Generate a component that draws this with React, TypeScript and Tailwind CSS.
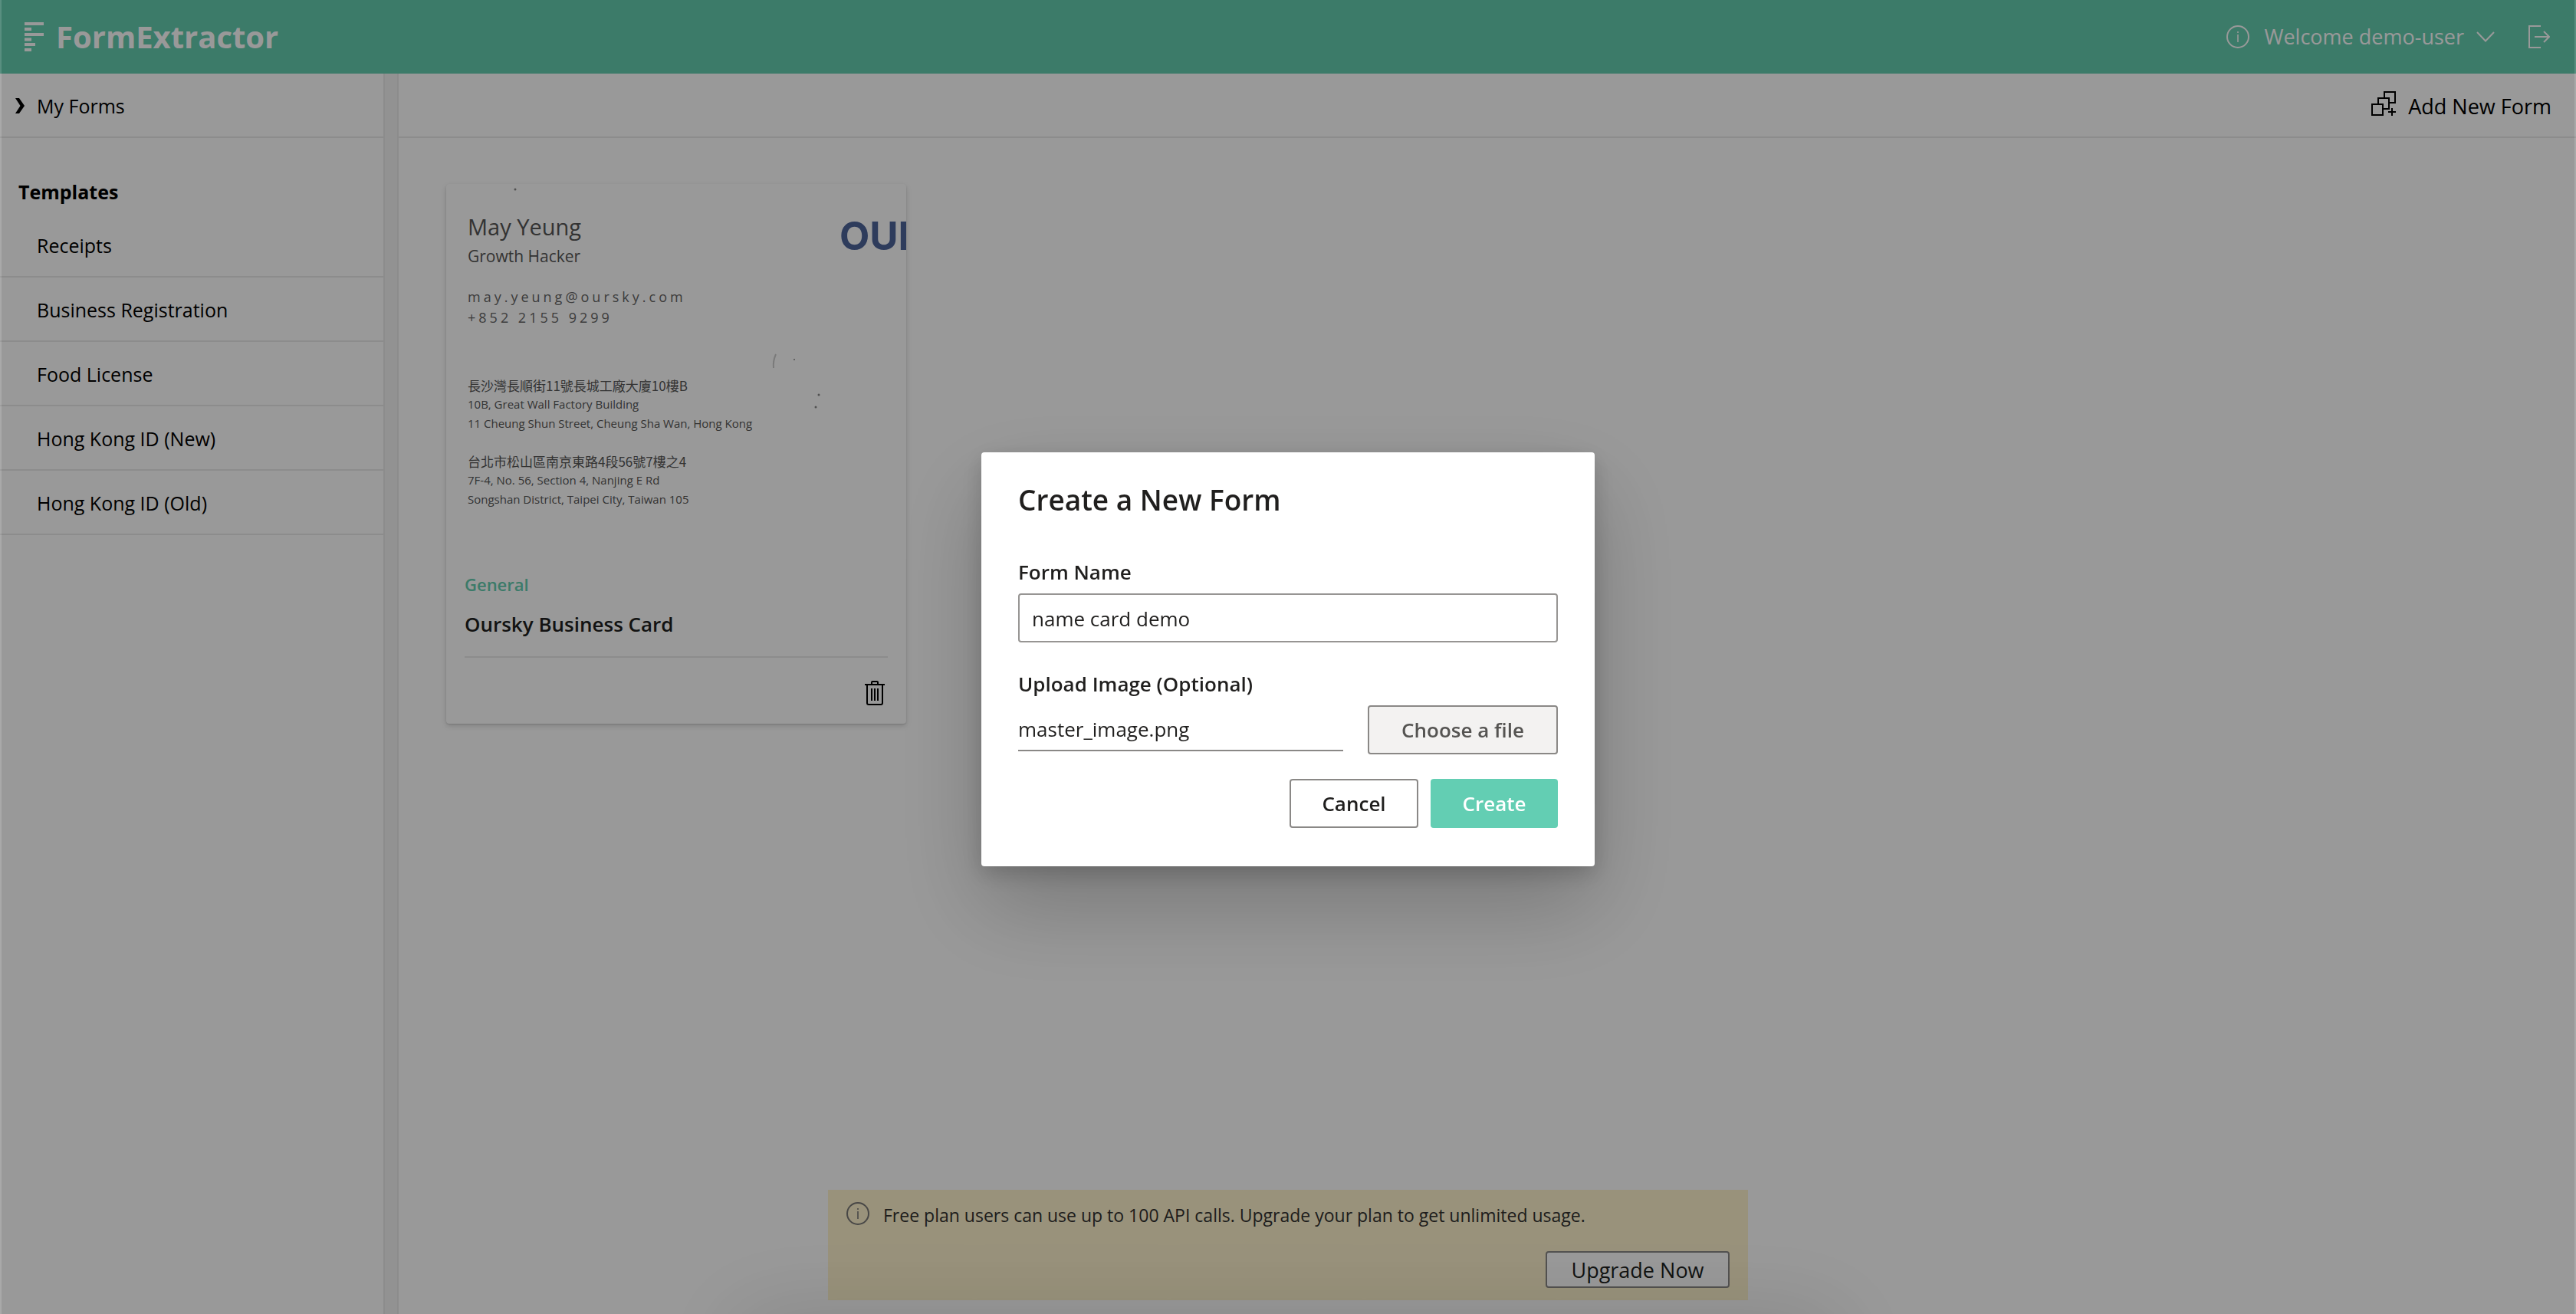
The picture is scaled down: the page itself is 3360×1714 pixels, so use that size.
import React, { useState } from "react";

const templates = [
  "Receipts",
  "Business Registration",
  "Food License",
  "Hong Kong ID (New)",
  "Hong Kong ID (Old)",
];

function InfoIcon() {
  return (
    <svg className="h-[30px] w-[30px] shrink-0" viewBox="0 0 30 30" fill="none" stroke="currentColor" strokeWidth="2" aria-hidden="true">
      <circle cx="15" cy="15" r="14" />
      <path d="M15 8v2M15 12v10" strokeWidth="1.6" />
    </svg>
  );
}

function LogoMark() {
  return (
    <svg className="h-[38px] w-[25px] shrink-0" viewBox="0 0 25 38" fill="currentColor" aria-hidden="true">
      <path d="M0 0h25v4H0zM0 7h9v4H0zM0 14h25v4H0zM0 20.5h9v4H0zM0 27h14v4H0zM0 34h9v4H0z" />
    </svg>
  );
}

function Header() {
  return (
    <header className="flex h-24 shrink-0 items-center justify-between bg-[#64cdb0] pr-[34px] pl-8 text-white">
      <a href="#home" className="flex items-center gap-4 text-[40px] leading-[52px] font-bold">
        <LogoMark />
        FormExtractor
      </a>
      <div className="flex items-center text-[27px] leading-10">
        <InfoIcon />
        <button type="button" className="ml-5 flex items-center gap-4">
          Welcome demo-user
          <svg className="h-3.5 w-6" viewBox="0 0 24 14" fill="none" stroke="currentColor" strokeWidth="2" aria-hidden="true">
            <path d="M1 1l11 11.5L23 1" />
          </svg>
        </button>
        <button type="button" aria-label="Sign out" className="ml-11">
          <svg className="h-[30px] w-7" viewBox="0 0 28 30" fill="none" stroke="currentColor" strokeWidth="2" aria-hidden="true">
            <path d="M16 1H1v28h15M8 15h19M20 8l7 7-7 7" />
          </svg>
        </button>
      </div>
    </header>
  );
}

function Sidebar() {
  return (
    <nav className="w-[502px] shrink-0 border-r-2 border-[#eaeaea] bg-white text-[25px] leading-10 text-black">
      <a href="#forms" className="flex h-[84px] items-center gap-4 border-b-2 border-[#eaeaea] pt-0.5 pl-5">
        <svg className="h-5 w-3" viewBox="0 0 12 20" fill="currentColor" aria-hidden="true">
          <path d="M0 0h5l7 10-7 10H0l6.5-10z" />
        </svg>
        My Forms
      </a>
      <h2 className="mt-[50px] mb-2 pl-6 font-bold">Templates</h2>
      <ul>
        {templates.map((name) => (
          <li key={name}>
            <a href="#template" className="flex h-[84px] items-center border-b-2 border-[#eaeaea] pt-0.5 pl-12">
              {name}
            </a>
          </li>
        ))}
      </ul>
    </nav>
  );
}

function CardPreview() {
  return (
    <div className="relative h-[482px] overflow-hidden pt-9 pl-7 text-[#555]">
      <div className="flex justify-between">
        <div>
          <p className="text-[29px] leading-10">May Yeung</p>
          <p className="mt-0.5 text-[21px] leading-8">Growth Hacker</p>
        </div>
        <p className="w-[87px] overflow-hidden font-[Inter] text-[51px] leading-[64px] font-bold text-[#4e6499]">OUR</p>
      </div>
      <p className="mt-6 text-[18px] leading-[27px] tracking-[4px] text-[#666]">
        may.yeung@oursky.com
        <br />
        +852 2155 9299
      </p>
      <div className="mt-[62px] text-[15px] leading-[25px]">
        <p className="font-['Noto_Sans_CJK_TC',sans-serif] text-[17px]">長沙灣長順街11號長城工廠大廈10樓B</p>
        <p>10B, Great Wall Factory Building</p>
        <p>11 Cheung Shun Street, Cheung Sha Wan, Hong Kong</p>
      </div>
      <div className="mt-6 text-[15px] leading-[25px]">
        <p className="font-['Noto_Sans_CJK_TC',sans-serif] text-[17px]">台北市松山區南京東路4段56號7樓之4</p>
        <p>7F-4, No. 56, Section 4, Nanjing E Rd</p>
        <p>Songshan District, Taipei City, Taiwan 105</p>
      </div>
      <svg className="absolute inset-0 h-full w-full" viewBox="0 0 600 482" fill="#888" aria-hidden="true">
        <circle cx="90" cy="7" r="1.5" />
        <path d="M430 222q-4 9-3 18" fill="none" stroke="#ccc" strokeWidth="2" />
        <circle cx="454" cy="229" r="1" />
        <circle cx="486" cy="275" r="1.5" />
        <circle cx="482" cy="291" r="1.5" />
      </svg>
    </div>
  );
}

function FormCard() {
  return (
    <article className="w-[600px] rounded-[4px] bg-white shadow-[0_3px_7px_rgba(0,0,0,0.15),0_1px_2px_rgba(0,0,0,0.12)]">
      <CardPreview />
      <div className="mx-6 border-b-2 border-[#eaeaea] pt-6 pb-[22px] font-semibold">
        <p className="text-[22px] leading-8 text-[#64cdb0]">General</p>
        <h3 className="mt-4 text-[26px] leading-10 text-[#201f1e]">Oursky Business Card</h3>
      </div>
      <div className="flex justify-end pt-[30px] pr-7 pb-6">
        <button type="button" aria-label="Delete form">
          <svg className="h-8 w-[26px] text-black" viewBox="0 0 26 32" fill="none" stroke="currentColor" strokeWidth="2" aria-hidden="true">
            <path d="M0 5h26M9 5V2q0-1 1-1h6q1 0 1 1v3M3 5v24q0 2 2 2h16q2 0 2-2V5M9 10v16M13 10v16M17 10v16" />
          </svg>
        </button>
      </div>
    </article>
  );
}

function Content() {
  return (
    <main className="min-w-0 flex-1 border-l-2 border-[#eaeaea] bg-white">
      <div className="flex h-[84px] items-center justify-end border-b-2 border-[#eaeaea] pt-1 pr-8">
        <button type="button" className="flex items-center gap-4 text-[27px] leading-10 text-black">
          <svg className="mb-2 h-8 w-8" viewBox="0 0 32 32" fill="none" stroke="currentColor" strokeWidth="2" aria-hidden="true">
            <path d="M1 17h14v14H1zM9 17V9h14v14h-7M17 9V1h14v14h-7M27 22v10M22 27h10" />
          </svg>
          Add New Form
        </button>
      </div>
      <div className="flex flex-wrap gap-8 px-[62px] py-[60px]">
        <FormCard />
      </div>
    </main>
  );
}

function PlanBanner() {
  return (
    <aside className="absolute bottom-[18px] left-1/2 w-[1200px] -translate-x-1/2 bg-[#fff4ce] px-6 py-4">
      <div className="flex items-start gap-[18px] text-[23px] leading-[34px] text-[#323130]">
        <span className="text-[#797775]">
          <InfoIcon />
        </span>
        <p>Free plan users can use up to 100 API calls. Upgrade your plan to get unlimited usage.</p>
      </div>
      <div className="mt-[30px] flex justify-end">
        <button type="button" className="h-12 w-60 rounded-[4px] border-2 border-[#8a8886] bg-white pt-0.5 text-[27px] leading-10 text-[#201f1e]">
          Upgrade Now
        </button>
      </div>
    </aside>
  );
}

function CreateFormDialog() {
  const [name, setName] = useState("name card demo");
  return (
    <div className="fixed inset-0 flex items-center justify-center overflow-hidden border-x-2 border-white/15 bg-black/40 pt-1.5">
      <form
        role="dialog"
        aria-labelledby="dialog-title"
        className="w-[800px] rounded-[4px] bg-white px-12 pt-9 pb-[50px] text-[26px] leading-10 text-[#201f1e] shadow-[0_51px_115px_rgba(0,0,0,0.22),0_10px_29px_rgba(0,0,0,0.18)]"
      >
        <h1 id="dialog-title" className="text-[37px] leading-[52px] font-semibold">
          Create a New Form
        </h1>
        <label htmlFor="form-name" className="mt-12 block font-semibold">
          Form Name
        </label>
        <input
          id="form-name"
          type="text"
          value={name}
          onChange={(e) => setName(e.target.value)}
          className="mt-2 block h-16 w-full rounded-[4px] border-2 border-[#979593] px-4 pt-0.5"
        />
        <label htmlFor="form-image" className="mt-[34px] block font-semibold">
          Upload Image (Optional)
        </label>
        <div className="mt-2 flex items-start gap-8">
          <input
            id="form-image"
            type="text"
            readOnly
            value="master_image.png"
            className="h-[60px] min-w-0 flex-1 border-b-2 border-[#8a8886] pt-1"
          />
          <button type="button" className="h-16 w-[248px] rounded-[4px] border-2 border-[#8a8886] bg-[#f3f2f1] font-semibold text-[#555452]">
            Choose a file
          </button>
        </div>
        <div className="mt-8 flex justify-end gap-4">
          <button type="button" className="h-16 w-[168px] rounded-[4px] border-2 border-[#8a8886] bg-white font-semibold">
            Cancel
          </button>
          <button type="button" className="h-16 w-[166px] rounded-[4px] bg-[#63ceb3] font-semibold text-white">
            Create
          </button>
        </div>
      </form>
      <div className="absolute top-full left-1/2 h-60 w-[1440px] -translate-x-1/2 shadow-[0_0_120px_rgba(0,0,0,0.13)]" />
    </div>
  );
}

export default function App() {
  return (
    <div className="relative flex h-screen flex-col overflow-hidden bg-[#f4f4f4] font-['Open_Sans','Noto_Sans_CJK_TC',sans-serif]">
      <Header />
      <div className="flex min-h-0 flex-1 gap-4">
        <Sidebar />
        <Content />
      </div>
      <PlanBanner />
      <CreateFormDialog />
    </div>
  );
}
